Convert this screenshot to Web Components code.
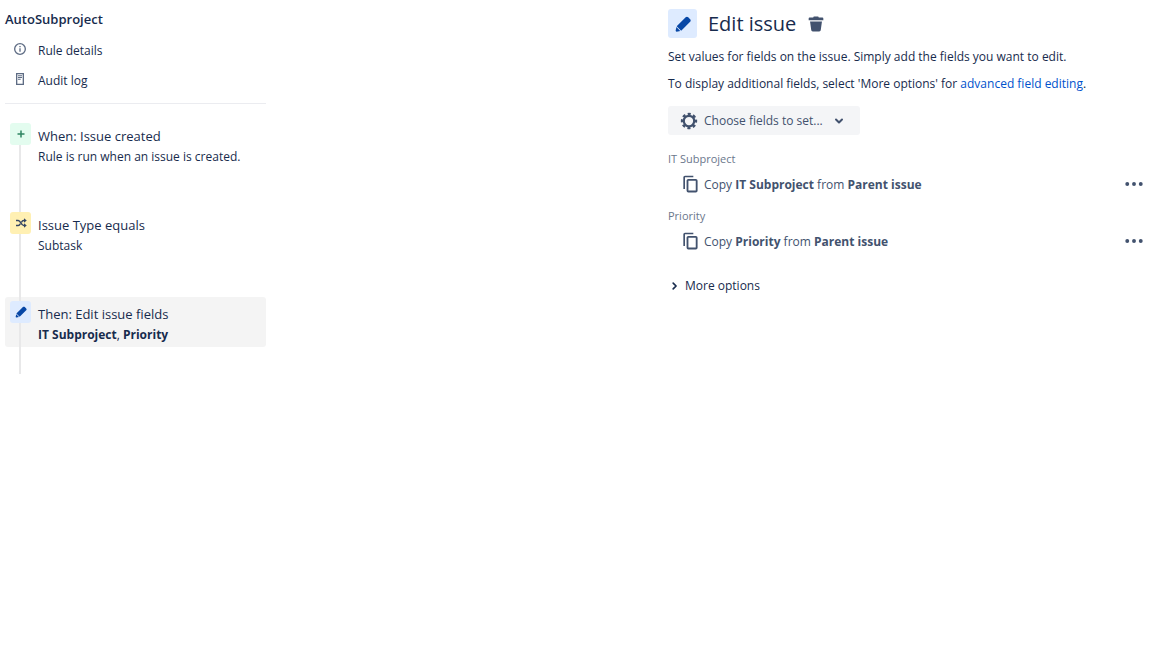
<!DOCTYPE html>
<html lang="en">
<head>
<meta charset="utf-8">
<meta name="viewport" content="width=device-width, initial-scale=1">
<title>AutoSubproject</title>
<style>
  body { margin: 0; background: #fff; color: #172b4d; font: 12px/20px "Open Sans", "Noto Sans", sans-serif; }
</style>
</head>
<body>
<automation-page>
  <rule-sidebar slot="sidebar" heading="AutoSubproject">
    <rule-link slot="links" icon="info" href="#details">Rule details</rule-link>
    <rule-link slot="links" icon="log" href="#audit">Audit log</rule-link>
    <rule-step icon="plus" tone="green"><span slot="title">When: Issue created</span>Rule is run when an issue is created.</rule-step>
    <rule-step icon="shuffle" tone="yellow"><span slot="title">Issue Type equals</span>Subtask</rule-step>
    <rule-step icon="pencil" tone="blue" selected><span slot="title">Then: Edit issue fields</span><b>IT Subproject</b>, <b>Priority</b></rule-step>
  </rule-sidebar>
  <edit-panel slot="panel">
    <field-row label="IT Subproject">Copy <b>IT Subproject</b> from <b>Parent issue</b></field-row>
    <field-row label="Priority">Copy <b>Priority</b> from <b>Parent issue</b></field-row>
  </edit-panel>
</automation-page>
<script>
const ICONS = {
  info: '<circle cx="12" cy="12" r="8" fill="none" stroke="currentColor" stroke-width="2"/><path d="M11 11h2v5h-2zM11 7.500h2v2h-2z"/>',
  log: '<path fill="none" stroke="currentColor" stroke-width="2" d="M7 4h10v16H7z"/><path d="M9 6.500h6V8H9zM9 9h6v1.500H9zM9 11.500h4V13H9z"/>',
  plus: '<path d="M10.500 5h3v5.500H19v3h-5.500V19h-3v-5.500H5v-3h5.500z"/>',
  shuffle: '<path fill="none" stroke="currentColor" stroke-width="3" d="M2 7h4.500c4.500 0 6 10 11 10H20M2 17h4.500c2 0 3-1.500 4-3.500M13 10.500C14 8.500 15.500 7 17.500 7H20"/><path d="M18 2.500l5.500 4.500-5.500 4.500zM18 12.500l5.500 4.500-5.500 4.500z"/>',
  pencil: '<path d="M4 19.200c-.1.700.5 1.300 1.200 1.200l3.800-.8-4.200-4.200zM19.800 6.700l-2.100-2.100c-.8-.8-2-.8-2.800 0l-9.800 9.800 4.900 4.900 9.800-9.800c.8-.8.8-2 0-2.800z"/>',
  trash: '<path d="M4 6c0-.6.4-1 1-1h4c0-.8.500-1.300 1.200-1.300h3.600c.7 0 1.200.5 1.200 1.300h4c.6 0 1 .4 1 1v1.800H4zM5.500 9.200h13l-1.300 9.300c-.1 1-.8 1.600-1.700 1.600h-7c-.9 0-1.600-.6-1.700-1.600z"/>',
  gear: '<circle cx="12" cy="12" r="7" fill="none" stroke="currentColor" stroke-width="3"/><circle cx="12" cy="12" r="9.200" fill="none" stroke="currentColor" stroke-width="3.400" stroke-dasharray="4 3.226" stroke-dashoffset="2"/>',
  copy: '<path d="M4 18V4c0-1.100.9-2 2-2h10v2H6v14z"/><path fill="none" stroke="currentColor" stroke-width="2.200" d="M10 7h9c.6 0 1 .4 1 1v12c0 .6-.4 1-1 1h-9c-.6 0-1-.4-1-1V8c0-.6.4-1 1-1z"/>',
  down: '<path fill="none" stroke="currentColor" stroke-width="4" stroke-linecap="round" stroke-linejoin="round" d="M6 9l6 6 6-6"/>',
  right: '<path fill="none" stroke="currentColor" stroke-width="4" stroke-linecap="round" stroke-linejoin="round" d="M10 5l7 7-7 7"/>',
  more: '<circle cx="3" cy="12" r="2.600"/><circle cx="12" cy="12" r="2.600"/><circle cx="21" cy="12" r="2.600"/>'
};

const define = (name, render) => customElements.define(name, class extends HTMLElement {
  connectedCallback() {
    if (this.shadowRoot) return;
    const t = document.createElement('template');
    t.innerHTML = render(this);
    this.attachShadow({ mode: 'open' }).append(t.content.cloneNode(true));
  }
});

define('ui-icon', el => `
  <style>
    :host { display: block; flex: none; width: var(--size, 16px); height: var(--size, 16px); }
    svg { display: block; width: 100%; height: 100%; fill: currentColor; }
  </style>
  <svg viewBox="0 0 24 24" aria-hidden="true">${ICONS[el.getAttribute('name')]}</svg>`);

define('automation-page', () => `
  <style>
    :host { display: grid; grid-template-columns: 261px minmax(0, 481px); justify-content: space-between; gap: 20px; padding: 9px 20px 20px 5px; }
  </style>
  <slot name="sidebar"></slot>
  <slot name="panel"></slot>`);

define('rule-sidebar', el => `
  <style>
    :host { display: block; }
    h2 { margin: 0; font-size: 13px; line-height: 20px; font-weight: 600; }
    nav { display: grid; gap: 10px; padding: 12px 0; border-bottom: 1px solid #ebecf0; }
    .steps { display: grid; gap: 39px; padding: 15px 0 27px; }
  </style>
  <h2>${el.getAttribute('heading')}</h2>
  <nav><slot name="links"></slot></nav>
  <div class="steps"><slot></slot></div>`);

define('rule-link', el => `
  <style>
    :host { display: block; }
    a { display: flex; align-items: flex-start; gap: 10px; padding-left: 7px; color: inherit; text-decoration: none; }
    ui-icon { color: #5e6c84; }
  </style>
  <a href="${el.getAttribute('href')}"><ui-icon name="${el.getAttribute('icon')}"></ui-icon><span><slot></slot></span></a>`);

define('rule-step', el => `
  <style>
    :host { display: flex; gap: 7px; padding: 0 5px; border-radius: 3px; }
    :host([selected]) { background: #f4f4f4; }
    .rail { position: relative; padding-top: 4px; }
    .rail::before { content: ""; position: absolute; left: 9px; top: 4px; bottom: -43px; width: 2px; background: #e8e8e9; }
    :host(:last-of-type) .rail::before { bottom: -27px; }
    .badge { position: relative; display: grid; place-items: center; width: 21px; height: 22px; border-radius: 3px; --size: 12px; }
    .green { background: #e3fcef; color: #2f8462; }
    .yellow { background: #fff0b3; color: #344563; }
    .blue { background: #deebff; color: #0747a6; --size: 16px; }
    .text { display: grid; gap: 1px; padding: 7px 0 2px; }
    .title { font-size: 13px; }
  </style>
  <div class="rail"><div class="badge ${el.getAttribute('tone')}"><ui-icon name="${el.getAttribute('icon')}"></ui-icon></div></div>
  <div class="text"><div class="title"><slot name="title"></slot></div><div><slot></slot></div></div>`);

define('field-row', el => `
  <style>
    :host { display: block; color: #42526e; }
    .label { font-size: 11px; line-height: 20px; color: #6b778c; }
    .row { display: flex; align-items: center; gap: 4px; padding-left: 12px; height: 30px; font-weight: 500; --size: 20px; }
    .row span { padding-top: 2px; }
    button { margin-left: auto; padding: 0 6px; border: 0; background: none; color: inherit; --size: 18px; }
  </style>
  <div class="label">${el.getAttribute('label')}</div>
  <div class="row">
    <ui-icon name="copy"></ui-icon><span><slot></slot></span>
    <button type="button" aria-label="More actions"><ui-icon name="more"></ui-icon></button>
  </div>`);

define('edit-panel', () => `
  <style>
    :host { display: block; }
    header { display: flex; align-items: center; height: 29px; }
    .badge { display: grid; place-items: center; width: 29px; height: 29px; border-radius: 3px; background: #deebff; color: #0747a6; --size: 22px; }
    h1 { margin: 0 9px 0 11px; font-size: 20px; line-height: 29px; font-weight: 500; }
    header button { --size: 22px; }
    button { display: flex; align-items: center; padding: 0; border: 0; background: none; color: #42526e; font: inherit; font-weight: 500; }
    p { margin: 9px 0 7px; }
    p + p { margin: 7px 0 12px; }
    a { color: #0052cc; text-decoration: none; }
    .choose { gap: 6px; height: 29px; margin-bottom: 14px; padding: 0 15px 0 12px; border-radius: 3px; background: #f4f5f7; }
    .choose ui-icon:first-child { --size: 18px; }
    .choose ui-icon:last-child { --size: 12px; margin-left: 4px; }
    .fields { display: grid; gap: 7px; }
    .more { gap: 6px; margin-top: 20px; padding-left: 1px; color: #172b4d; --size: 10px; }
  </style>
  <header>
    <div class="badge"><ui-icon name="pencil"></ui-icon></div>
    <h1>Edit issue</h1>
    <button type="button" aria-label="Delete"><ui-icon name="trash"></ui-icon></button>
  </header>
  <p>Set values for fields on the issue. Simply add the fields you want to edit.</p>
  <p>To display additional fields, select 'More options' for <a href="#advanced">advanced field editing</a>.</p>
  <button class="choose" type="button"><ui-icon name="gear"></ui-icon><span>Choose fields to set...</span><ui-icon name="down"></ui-icon></button>
  <div class="fields"><slot></slot></div>
  <button class="more" type="button" aria-expanded="false"><ui-icon name="right"></ui-icon><span>More options</span></button>`);
</script>
</body>
</html>
